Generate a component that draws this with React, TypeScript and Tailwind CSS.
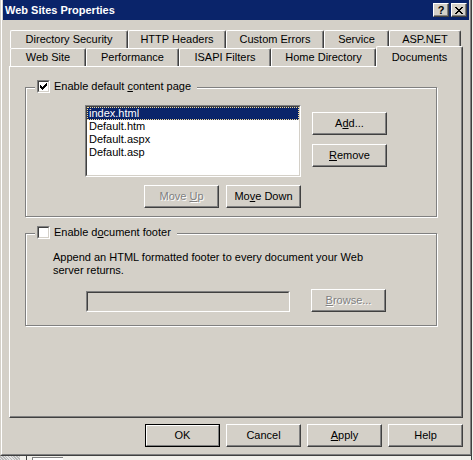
import type { ReactNode } from 'react';

const ROW_ONE = [
  { label: 'Directory Security', w: 'w-[118px]' },
  { label: 'HTTP Headers', w: 'w-[98px]' },
  { label: 'Custom Errors', w: 'w-[98px]' },
  { label: 'Service', w: 'w-[65px]' },
  { label: 'ASP.NET', w: 'w-[72px]' },
];

const ROW_TWO = [
  { label: 'Web Site', w: 'w-[76px]' },
  { label: 'Performance', w: 'w-[93px]' },
  { label: 'ISAPI Filters', w: 'w-[92px]' },
  { label: 'Home Directory', w: 'w-[105px]' },
];

const PAGES = ['index.html', 'Default.htm', 'Default.aspx', 'Default.asp'];

function Checkbox({ checked }: { checked?: boolean }) {
  return (
    <span className="block w-[13px] h-[13px] shrink-0 border border-t-[#808080] border-l-[#808080] border-b-white border-r-white">
      <span className="block w-[11px] h-[11px] bg-white border border-t-[#404040] border-l-[#404040] border-b-[#D4D0C8] border-r-[#D4D0C8]">
        {checked && (
          <svg width="9" height="9" viewBox="0 0 9 9" className="block" shapeRendering="crispEdges">
            <path d="M1 3h1v3H1zM2 4h1v3H2zM3 5h1v3H3zM4 4h1v3H4zM5 3h1v3H5zM6 2h1v3H6zM7 1h1v3H7z" fill="#000" />
          </svg>
        )}
      </span>
    </span>
  );
}

function Button({ children, className = '', disabled, isDefault }: { children: ReactNode; className?: string; disabled?: boolean; isDefault?: boolean }) {
  const text = disabled ? 'text-[#808080] [text-shadow:1px_1px_0_#fff]' : 'text-black';
  if (isDefault) {
    return (
      <div className={`shrink-0 border border-black ${className}`}>
        <div className={`h-full flex items-center justify-center border border-t-white border-l-white border-b-[#808080] border-r-[#808080] ${text}`}>
          <span>{children}</span>
        </div>
      </div>
    );
  }
  return (
    <div className={`shrink-0 flex items-center justify-center border border-t-white border-l-white border-b-[#404040] border-r-[#404040] shadow-[inset_-1px_-1px_0_#808080] ${text} ${className}`}>
      <span>{children}</span>
    </div>
  );
}

function Tab({ label, className = '' }: { label: string; className?: string }) {
  return (
    <div className={`shrink-0 h-[18px] flex items-center justify-center rounded-t-[2px] border-t border-l border-r border-t-white border-l-white border-r-[#404040] shadow-[inset_-1px_0_0_#808080] ${className}`}>
      {label}
    </div>
  );
}

function Sunken({ className = '', inner = 'bg-white', children }: { className?: string; inner?: string; children?: ReactNode }) {
  return (
    <div className={`shrink-0 border border-t-[#808080] border-l-[#808080] border-b-white border-r-white ${className}`}>
      <div className={`h-full border border-t-[#404040] border-l-[#404040] border-b-[#D4D0C8] border-r-[#D4D0C8] ${inner}`}>
        {children}
      </div>
    </div>
  );
}

function GroupBox({ className = '', legend, children }: { className?: string; legend: ReactNode; children: ReactNode }) {
  return (
    <div className={`relative border border-[#808080] shadow-[inset_1px_1px_0_#fff,1px_1px_0_#fff] ${className}`}>
      {/* legend sits over the etched top line */}
      <div className="absolute left-[9px] -top-[8px] flex items-center gap-[4px] bg-[#D4D0C8] pl-[2px] pr-[6px]">
        {legend}
      </div>
      {children}
    </div>
  );
}

export default function App() {
  return (
    <div className="relative w-[473px] h-[460px] overflow-hidden bg-[#F2F1EC] font-['Liberation_Sans',Arial,sans-serif] text-[11px] leading-[13px] text-black">
      {/* desktop bits peeking out under and beside the dialog */}
      <div className="absolute left-0 top-[456px] w-[20px] h-[4px] bg-[repeating-linear-gradient(45deg,#b9b9b9_0_1px,#e6e6e6_1px_2px)]" />
      <div className="absolute left-[26px] top-[456px] w-px h-[4px] bg-[#404040]" />
      <div className="absolute left-[32px] top-[457px] w-[31px] h-[3px] border-t border-l border-[#808080] bg-white" />
      <div className="absolute left-[471px] top-[20px] w-px h-[440px] bg-[#404040]" />

      <div className="w-[472px] h-[456px] border-l border-r border-b border-l-[#D4D0C8] border-r-[#404040] border-b-[#404040]">
        <div className="h-full flex flex-col border-l border-r border-b border-l-white border-r-[#808080] border-b-[#808080] bg-[#D4D0C8] px-px">
          {/* caption */}
          <div className="h-[20px] shrink-0 flex items-center bg-[#0A246A] pl-[2px] pr-[2px]">
            <span className="pt-px text-white font-bold text-[11px]">Web Sites Properties</span>
            <div className="ml-auto flex gap-[2px]">
              <div className="w-[16px] h-[14px] flex items-center justify-center border border-t-white border-l-white border-b-[#404040] border-r-[#404040] bg-[#D4D0C8] shadow-[inset_-1px_-1px_0_#808080] font-bold text-[11px] leading-none">
                ?
              </div>
              <div className="w-[16px] h-[14px] flex items-center justify-center border border-t-white border-l-white border-b-[#404040] border-r-[#404040] bg-[#D4D0C8] shadow-[inset_-1px_-1px_0_#808080]">
                <svg width="8" height="7" viewBox="0 0 8 7" shapeRendering="crispEdges">
                  <path d="M0 0h2v1H0zM6 0h2v1H6zM1 1h2v1H1zM5 1h2v1H5zM2 2h4v1H2zM3 3h2v1H3zM2 4h4v1H2zM1 5h2v1H1zM5 5h2v1H5zM0 6h2v1H0zM6 6h2v1H6z" fill="#000" />
                </svg>
              </div>
            </div>
          </div>

          {/* tab strip */}
          <div className="mt-[10px] ml-[7px] flex">
            {ROW_ONE.map((t) => (
              <Tab key={t.label} label={t.label} className={t.w} />
            ))}
          </div>
          <div className="ml-[7px] h-[18px] flex items-end">
            {ROW_TWO.map((t) => (
              <Tab key={t.label} label={t.label} className={t.w} />
            ))}
            <div className="relative z-10 -mb-px shrink-0 w-[87px] h-[21px] flex justify-center pt-[4px] bg-[#D4D0C8] rounded-t-[2px] border-t border-l border-r border-t-white border-l-white border-r-[#404040] shadow-[inset_-1px_0_0_#808080]">
              Documents
            </div>
          </div>

          {/* page */}
          <div className="ml-[6px] w-[454px] h-[352px] shrink-0 border border-t-white border-l-white border-b-[#404040] border-r-[#404040] shadow-[inset_-1px_-1px_0_#808080] pl-[15px] pt-[20px]">
            <GroupBox
              className="w-[412px] h-[130px]"
              legend={
                <>
                  <Checkbox checked />
                  <span>Enable default <u>c</u>ontent page</span>
                </>
              }
            >
              <div className="mt-[17px] ml-[59px] flex">
                <Sunken className="w-[216px] h-[72px]">
                  {PAGES.map((p, i) => (
                    <div
                      key={p}
                      className={
                        i === 0
                          ? 'h-[13px] pl-px bg-[#0A246A] text-white border border-dotted border-[#F5DB95] leading-[11px]'
                          : 'h-[13px] pl-[2px]'
                      }
                    >
                      {p}
                    </div>
                  ))}
                </Sunken>
                <div className="ml-[11px] mt-[7px] flex flex-col gap-[9px]">
                  <Button className="w-[75px] h-[23px]">A<u>d</u>d...</Button>
                  <Button className="w-[75px] h-[23px]"><u>R</u>emove</Button>
                </div>
              </div>
              <div className="mt-[8px] ml-[118px] flex gap-[7px]">
                <Button className="w-[75px] h-[23px]" disabled>Move <u>U</u>p</Button>
                <Button className="w-[75px] h-[23px]">Mo<u>v</u>e Down</Button>
              </div>
            </GroupBox>

            <GroupBox
              className="mt-[16px] w-[412px] h-[93px]"
              legend={
                <>
                  <Checkbox />
                  <span>Enable d<u>o</u>cument footer</span>
                </>
              }
            >
              <p className="mt-[17px] ml-[27px] w-[330px]">
                Append an HTML formatted footer to every document your Web server returns.
              </p>
              <div className="mt-[12px] ml-[60px] flex items-end">
                <Sunken className="w-[204px] h-[21px]" inner="bg-[#D4D0C8]" />
                <Button className="ml-[21px] w-[75px] h-[23px]" disabled>
                  <u>B</u>rowse...
                </Button>
              </div>
            </GroupBox>
          </div>

          {/* dialog buttons */}
          <div className="mt-[6px] ml-[142px] flex gap-[6px]">
            <Button className="w-[75px] h-[23px]" isDefault>OK</Button>
            <Button className="w-[75px] h-[23px]">Cancel</Button>
            <Button className="w-[75px] h-[23px]"><u>A</u>pply</Button>
            <Button className="w-[75px] h-[23px]">Help</Button>
          </div>
        </div>
      </div>
    </div>
  );
}
